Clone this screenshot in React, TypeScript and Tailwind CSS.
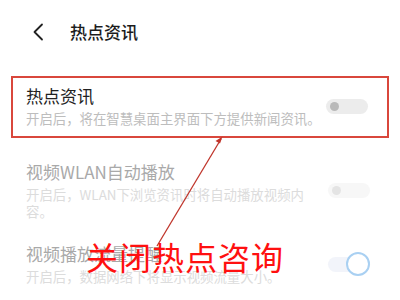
import React from 'react';

const font = { fontFamily: '"Noto Sans CJK SC", "Noto Sans", sans-serif' };

interface SettingRowProps {
  title: string;
  desc: string;
  titleColor: string;
  descColor: string;
  toggle: React.ReactNode;
}

const SettingRow: React.FC<SettingRowProps> = ({ title, desc, titleColor, descColor, toggle }) => {
  return (
    <div className="flex items-center justify-between">
      <div className="w-[296px]">
        <div className={`text-[17px] leading-[22px] ${titleColor}`}>{title}</div>
        <div className={`mt-[3px] text-[13.4px] leading-[17px] ${descColor}`}>{desc}</div>
      </div>
      {toggle}
    </div>
  );
};

const OffToggle: React.FC<{ faded?: boolean }> = ({ faded }) => (
  <div className={`w-[42px] h-[15px] rounded-full flex items-center pl-[4px] ${faded ? 'bg-[#f7f7f7]' : 'bg-[#ececec]'}`}>
    <div className={`w-[9px] h-[9px] rounded-full ${faded ? 'bg-[#e4e4e4]' : 'bg-[#b9b9b9]'}`} />
  </div>
);

const LoadingToggle: React.FC = () => (
  <div className="relative w-[42px] h-[15px] rounded-full bg-[#f2f4fa]">
    <div className="absolute left-[18px] top-[-5px] w-[24px] h-[24px] rounded-full border-[2.5px] border-[#a9d0f2] bg-white" />
  </div>
);

export default function App() {
  return (
    <div className="relative w-[400px] h-[300px] overflow-hidden bg-white" style={font}>
      <div className="flex items-center h-[64px] pl-[32px]">
        <svg width="12" height="18" viewBox="0 0 12 18" className="mr-[26px]">
          <path d="M10 1.5 L2.5 9 L10 16.5" fill="none" stroke="#222" strokeWidth="1.8" strokeLinecap="round" strokeLinejoin="round" />
        </svg>
        <span className="text-[17px] font-medium text-[#1c1c1c]">热点资讯</span>
      </div>

      <div className="mt-[12px] mx-[11px] border-2 border-[#d9473c] pl-[13px] pr-[19px] pt-[7px] pb-[9px]">
        <SettingRow
          title="热点资讯"
          desc="开启后，将在智慧桌面主界面下方提供新闻资讯。"
          titleColor="text-[#222]"
          descColor="text-[#bdbdbd]"
          toggle={<OffToggle />}
        />
      </div>

      <div className="pl-[26px] pr-[30px] pt-[23px]">
        <SettingRow
          title="视频WLAN自动播放"
          desc="开启后，WLAN下浏览资讯时将自动播放视频内容。"
          titleColor="text-[#a9a9a9]"
          descColor="text-[#dcdcdc]"
          toggle={<OffToggle faded />}
        />
        <div className="mt-[23px]">
          <SettingRow
            title="视频播放流量提醒"
            desc="开启后，数据网络下将显示视频流量大小。"
            titleColor="text-[#a9a9a9]"
            descColor="text-[#dcdcdc]"
            toggle={<LoadingToggle />}
          />
        </div>
      </div>

      <svg className="absolute left-0 top-0" width="400" height="300" viewBox="0 0 400 300">
        <line x1="157" y1="246" x2="221" y2="139" stroke="#c0352b" strokeWidth="1.3" />
        <path d="M222.5 136.5 L215.5 141 L220 143.5 Z" fill="#c0352b" />
      </svg>
      <div className="absolute left-[86px] top-[236px] text-[32px] leading-[40px] text-[#ff1010] tracking-[1px]">关闭热点咨询</div>
    </div>
  );
}
